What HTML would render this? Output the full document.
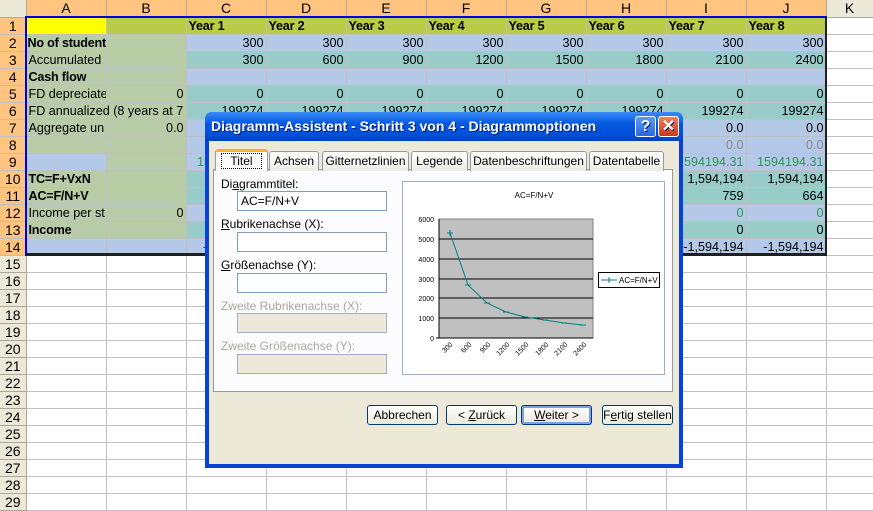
<!DOCTYPE html>
<html><head><meta charset="utf-8"><style>
*{margin:0;padding:0;box-sizing:border-box}
body{width:873px;height:507px;overflow:hidden;background:#fff;font-family:"Liberation Sans",Arial,sans-serif;font-size:13px;position:relative}
table{border-collapse:collapse;table-layout:fixed;position:absolute;left:0;top:0;width:873px}
td{height:17px;border-right:1px solid #c0c0c0;border-bottom:1px solid #c0c0c0;padding:0 2px;white-space:nowrap;overflow:hidden;line-height:16px;text-align:right;font-size:12.6px}
td.h{background:#ece9d8;text-align:center;border-color:#aca899;color:#000;font-size:14px}
tr.hd td{background:#ffc480;text-align:center;border-color:#aca899;font-size:14px}
tr.hd td.k{background:#ece9d8}
td.rh{background:#ffc480;font-size:14px}
td.l{text-align:left}
td.g{background:#b8cca8}
.b{font-weight:bold;letter-spacing:-0.2px}
.B td.c{background:#b4c8e8}.T td.c{background:#98ccc8}
.Y td.c{background:#b8cc48}
.gr{color:#2a9a50}.gy{color:#888}
.dlg{position:absolute;left:205px;top:112px;width:478px;height:356px;background:#0842d8;border-radius:7px 7px 0 0}
.tb{position:absolute;left:0;top:0;width:478px;height:29px;border-radius:7px 7px 0 0;background:linear-gradient(#3a8cf8,#0458e0 40%,#0050d8 80%,#0040c0);color:#fff;font-weight:bold;font-size:14px;line-height:29px;padding-left:6px;text-shadow:1px 1px #0a1e70}
.bd{position:absolute;left:4px;top:29px;width:470px;height:323px;background:#ece9d8}
.ab{position:absolute}
.tab{position:absolute;top:10px;height:20px;border:1px solid #919b9c;border-bottom:none;background:linear-gradient(#fff,#ecebe6);border-radius:3px 3px 0 0;text-align:center;font-size:12px;line-height:19px}
.inp{position:absolute;left:28px;width:150px;height:20px;background:#fff;border:1px solid #7f9db9;font-size:12px;line-height:18px;padding-left:3px}
.lab{position:absolute;left:12px;font-size:12px}
.btn{position:absolute;top:264px;width:71px;height:20px;border:1px solid #003c74;border-radius:3px;background:linear-gradient(#fff,#ece9d8);font-size:12px;text-align:center;line-height:18px}
</style></head><body>
<table>
<colgroup><col style="width:26px"><col style="width:80px"><col style="width:80px"><col style="width:80px"><col style="width:80px"><col style="width:80px"><col style="width:80px"><col style="width:80px"><col style="width:80px"><col style="width:80px"><col style="width:80px"><col style="width:47px"></colgroup>
<tr class="hd"><td class="k"></td><td>A</td><td>B</td><td>C</td><td>D</td><td>E</td><td>F</td><td>G</td><td>H</td><td>I</td><td>J</td><td class="k">K</td></tr>
<tr class="Y"><td class="rh" style="text-align:center">1</td><td class="c" style="background:#ffff00"></td><td class="c"></td><td class="c b l">Year 1</td><td class="c b l">Year 2</td><td class="c b l">Year 3</td><td class="c b l">Year 4</td><td class="c b l">Year 5</td><td class="c b l">Year 6</td><td class="c b l">Year 7</td><td class="c b l">Year 8</td><td></td></tr>
<tr class="B"><td class="rh" style="text-align:center">2</td><td class="g l b" style="padding:0 0 0 1px">No of students</td><td class="g"></td><td class="c">300</td><td class="c">300</td><td class="c">300</td><td class="c">300</td><td class="c">300</td><td class="c">300</td><td class="c">300</td><td class="c">300</td><td></td></tr>
<tr class="T"><td class="rh" style="text-align:center">3</td><td class="g l">Accumulated</td><td class="g"></td><td class="c">300</td><td class="c">600</td><td class="c">900</td><td class="c">1200</td><td class="c">1500</td><td class="c">1800</td><td class="c">2100</td><td class="c">2400</td><td></td></tr>
<tr class="B"><td class="rh" style="text-align:center">4</td><td class="g l b">Cash flow</td><td class="g"></td><td class="c"></td><td class="c"></td><td class="c"></td><td class="c"></td><td class="c"></td><td class="c"></td><td class="c"></td><td class="c"></td><td></td></tr>
<tr class="T"><td class="rh" style="text-align:center">5</td><td class="g l">FD depreciate</td><td class="g">0</td><td class="c">0</td><td class="c">0</td><td class="c">0</td><td class="c">0</td><td class="c">0</td><td class="c">0</td><td class="c">0</td><td class="c">0</td><td></td></tr>
<tr class="T"><td class="rh" style="text-align:center">6</td><td class="g l" colspan="2" style="overflow:hidden">FD annualized (8 years at 7</td><td class="c">199274</td><td class="c">199274</td><td class="c">199274</td><td class="c">199274</td><td class="c">199274</td><td class="c">199274</td><td class="c">199274</td><td class="c">199274</td><td></td></tr>
<tr class="B"><td class="rh" style="text-align:center">7</td><td class="g l">Aggregate un</td><td class="g">0.0</td><td class="c">0.0</td><td class="c">0.0</td><td class="c">0.0</td><td class="c">0.0</td><td class="c">0.0</td><td class="c">0.0</td><td class="c">0.0</td><td class="c">0.0</td><td></td></tr>
<tr class="B"><td class="rh" style="text-align:center">8</td><td class="g"></td><td class="g"></td><td class="c gy">0.0</td><td class="c gy">0.0</td><td class="c gy">0.0</td><td class="c gy">0.0</td><td class="c gy">0.0</td><td class="c gy">0.0</td><td class="c gy">0.0</td><td class="c gy">0.0</td><td></td></tr>
<tr class="B"><td class="rh" style="text-align:center">9</td><td class="c"></td><td class="g"></td><td class="c gr">1594194.31</td><td class="c gr">1594194.31</td><td class="c gr">1594194.31</td><td class="c gr">1594194.31</td><td class="c gr">1594194.31</td><td class="c gr">1594194.31</td><td class="c gr">1594194.31</td><td class="c gr">1594194.31</td><td></td></tr>
<tr class="T"><td class="rh" style="text-align:center">10</td><td class="g l b">TC=F+VxN</td><td class="g"></td><td class="c">1,594,194</td><td class="c">1,594,194</td><td class="c">1,594,194</td><td class="c">1,594,194</td><td class="c">1,594,194</td><td class="c">1,594,194</td><td class="c">1,594,194</td><td class="c">1,594,194</td><td></td></tr>
<tr class="T"><td class="rh" style="text-align:center">11</td><td class="g l b">AC=F/N+V</td><td class="g"></td><td class="c">5,314</td><td class="c">2,657</td><td class="c">1,771</td><td class="c">1,328</td><td class="c">1,063</td><td class="c">886</td><td class="c">759</td><td class="c">664</td><td></td></tr>
<tr class="B"><td class="rh" style="text-align:center">12</td><td class="g l">Income per st</td><td class="g">0</td><td class="c gr">0</td><td class="c gr">0</td><td class="c gr">0</td><td class="c gr">0</td><td class="c gr">0</td><td class="c gr">0</td><td class="c gr">0</td><td class="c gr">0</td><td></td></tr>
<tr class="T"><td class="rh" style="text-align:center">13</td><td class="g l b">Income</td><td class="g"></td><td class="c">0</td><td class="c">0</td><td class="c">0</td><td class="c">0</td><td class="c">0</td><td class="c">0</td><td class="c">0</td><td class="c">0</td><td></td></tr>
<tr class="B"><td class="rh" style="text-align:center">14</td><td class="c"></td><td class="c"></td><td class="c">-1,594,194</td><td class="c">-1,594,194</td><td class="c">-1,594,194</td><td class="c">-1,594,194</td><td class="c">-1,594,194</td><td class="c">-1,594,194</td><td class="c">-1,594,194</td><td class="c">-1,594,194</td><td></td></tr>
<tr><td class="h">15</td><td></td><td></td><td></td><td></td><td></td><td></td><td></td><td></td><td></td><td></td><td></td></tr>
<tr><td class="h">16</td><td></td><td></td><td></td><td></td><td></td><td></td><td></td><td></td><td></td><td></td><td></td></tr>
<tr><td class="h">17</td><td></td><td></td><td></td><td></td><td></td><td></td><td></td><td></td><td></td><td></td><td></td></tr>
<tr><td class="h">18</td><td></td><td></td><td></td><td></td><td></td><td></td><td></td><td></td><td></td><td></td><td></td></tr>
<tr><td class="h">19</td><td></td><td></td><td></td><td></td><td></td><td></td><td></td><td></td><td></td><td></td><td></td></tr>
<tr><td class="h">20</td><td></td><td></td><td></td><td></td><td></td><td></td><td></td><td></td><td></td><td></td><td></td></tr>
<tr><td class="h">21</td><td></td><td></td><td></td><td></td><td></td><td></td><td></td><td></td><td></td><td></td><td></td></tr>
<tr><td class="h">22</td><td></td><td></td><td></td><td></td><td></td><td></td><td></td><td></td><td></td><td></td><td></td></tr>
<tr><td class="h">23</td><td></td><td></td><td></td><td></td><td></td><td></td><td></td><td></td><td></td><td></td><td></td></tr>
<tr><td class="h">24</td><td></td><td></td><td></td><td></td><td></td><td></td><td></td><td></td><td></td><td></td><td></td></tr>
<tr><td class="h">25</td><td></td><td></td><td></td><td></td><td></td><td></td><td></td><td></td><td></td><td></td><td></td></tr>
<tr><td class="h">26</td><td></td><td></td><td></td><td></td><td></td><td></td><td></td><td></td><td></td><td></td><td></td></tr>
<tr><td class="h">27</td><td></td><td></td><td></td><td></td><td></td><td></td><td></td><td></td><td></td><td></td><td></td></tr>
<tr><td class="h">28</td><td></td><td></td><td></td><td></td><td></td><td></td><td></td><td></td><td></td><td></td><td></td></tr>
<tr><td class="h">29</td><td></td><td></td><td></td><td></td><td></td><td></td><td></td><td></td><td></td><td></td><td></td></tr>
</table>
<div class="ab" style="left:25px;top:16px;width:802px;height:240px;border:2px solid #0000e0;border-bottom:3px solid #202020;border-right:2px solid #202020"></div>

<div class="dlg">
 <div class="tb">Diagramm-Assistent - Schritt 3 von 4 - Diagrammoptionen
  <div class="ab" style="left:430px;top:4px;width:21px;height:21px;border:1px solid #fff;border-radius:3px;background:linear-gradient(#5a9af8,#2a66e0);text-align:center;line-height:19px;font-size:16px">?</div>
  <div class="ab" style="left:453px;top:4px;width:21px;height:21px;border:1px solid #fff;border-radius:3px;background:linear-gradient(#f08060,#c83818);text-align:center;line-height:19px;font-size:16px">✕</div>
 </div>
 <div class="bd">
  <div class="ab" style="left:4px;top:28px;width:460px;height:223px;border:1px solid #919b9c;background:#fcfcfe"></div>
  <div class="tab" style="left:6px;top:8px;width:53px;height:22px;background:#fcfcfe;border-top:3px solid #f8b030"><span style="border:1px dotted #000;padding:0 8px">Titel</span></div>
  <div class="tab" style="left:60px;width:50px">Achsen</div>
  <div class="tab" style="left:113px;width:87px">Gitternetzlinien</div>
  <div class="tab" style="left:202px;width:57px">Legende</div>
  <div class="tab" style="left:261px;width:117px">Datenbeschriftungen</div>
  <div class="tab" style="left:380px;width:75px">Datentabelle</div>
  <div class="lab" style="top:36px">Di<u>a</u>grammtitel:</div>
  <div class="inp" style="top:50px">AC=F/N+V</div>
  <div class="lab" style="top:76px"><u>R</u>ubrikenachse (X):</div>
  <div class="inp" style="top:91px"></div>
  <div class="lab" style="top:117px"><u>G</u>rößenachse (Y):</div>
  <div class="inp" style="top:132px"></div>
  <div class="lab" style="top:158px;color:#aca899">Zweite Rubrikenachse (X):</div>
  <div class="inp" style="top:172px;background:#ece9d8;border-color:#a0b0c8"></div>
  <div class="lab" style="top:198px;color:#aca899">Zweite Größenachse (Y):</div>
  <div class="inp" style="top:213px;background:#ece9d8;border-color:#a0b0c8"></div>
  <svg class="ab" style="left:193px;top:40px" width="264" height="196" viewBox="402 181 264 196">
   <rect x="402.5" y="181.5" width="262" height="193" fill="#fff" stroke="#a0b0c8"/>
   <text x="534" y="198" font-size="8" text-anchor="middle" font-family="Liberation Sans">AC=F/N+V</text>
   <rect x="439" y="219" width="154" height="119" fill="#c0c0c0" stroke="#808080"/>
   <g stroke="#000" stroke-width="1"><line x1="439" y1="239" x2="593" y2="239"/><line x1="439" y1="259" x2="593" y2="259"/><line x1="439" y1="279" x2="593" y2="279"/><line x1="439" y1="298" x2="593" y2="298"/><line x1="439" y1="318" x2="593" y2="318"/><line x1="439" y1="219" x2="439" y2="338"/><line x1="436" y1="338" x2="593" y2="338"/></g>
   <g font-size="7" font-family="Liberation Sans" text-anchor="end"><text x="434" y="222">6000</text><text x="434" y="242">5000</text><text x="434" y="262">4000</text><text x="434" y="282">3000</text><text x="434" y="301">2000</text><text x="434" y="321">1000</text><text x="434" y="341">0</text></g>
   <polyline fill="none" stroke="#008080" stroke-width="1" points="450,233 468,285 487,303 506,312 525,317 545,320 564,323 583,325"/>
   <g stroke="#008080"><path d="M447 233h6M450 230v6M465 285h6M484 303h6M503 312h6M522 317h6M542 320h6M561 323h6M580 325h6"/></g>
   <g font-size="7" font-family="Liberation Sans" text-anchor="end">
    <text transform="translate(453,345) rotate(-45)">300</text><text transform="translate(472,345) rotate(-45)">600</text><text transform="translate(491,345) rotate(-45)">900</text><text transform="translate(510,345) rotate(-45)">1200</text><text transform="translate(529,345) rotate(-45)">1500</text><text transform="translate(549,345) rotate(-45)">1800</text><text transform="translate(568,345) rotate(-45)">2100</text><text transform="translate(587,345) rotate(-45)">2400</text>
   </g>
   <rect x="598.5" y="272.5" width="61" height="15" fill="#fff" stroke="#000"/>
   <line x1="601" y1="280" x2="617" y2="280" stroke="#008080"/><line x1="609" y1="277" x2="609" y2="283" stroke="#008080"/>
   <text x="619" y="283" font-size="8" font-family="Liberation Sans">AC=F/N+V</text>
  </svg>
  <div class="btn" style="left:158px">Abbrechen</div>
  <div class="btn" style="left:237px">&lt; <u>Z</u>urück</div>
  <div class="btn" style="left:312px;box-shadow:inset 0 0 0 2px #7ca0e8"><u>W</u>eiter &gt;</div>
  <div class="btn" style="left:393px">F<u>e</u>rtig stellen</div>
 </div>
</div>
</body></html>
